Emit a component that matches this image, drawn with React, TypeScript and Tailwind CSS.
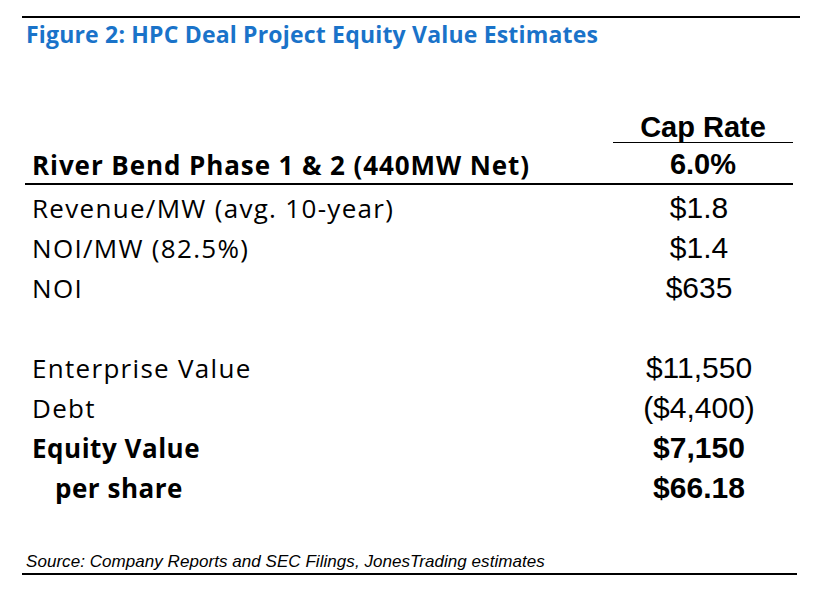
const rows = [
  { label: "Revenue/MW (avg. 10-year)", value: "$1.8" },
  { label: "NOI/MW (82.5%)", value: "$1.4" },
  { label: "NOI", value: "$635" },
  { label: "", value: "" },
  { label: "Enterprise Value", value: "$11,550" },
  { label: "Debt", value: "($4,400)" },
  { label: "Equity Value", value: "$7,150", bold: true },
  { label: "per share", value: "$66.18", bold: true, indent: true },
];

export default function App() {
  return (
    <div className="w-[824px] h-[596px] bg-white text-black pt-4">
      <div className="ml-[22px] w-[778px] border-t-2 border-black" />
      <h1 className="ml-[26px] mt-[4px] h-[24px] leading-[24px] text-[23px] tracking-[0.008em] font-bold text-[#1a73c9] font-['Open_Sans',sans-serif]">
        Figure 2: HPC Deal Project Equity Value Estimates
      </h1>

      <div className="ml-[25px] w-[768px] mt-[58px]">
        <div className="grid grid-cols-[1fr_180px]">
          <div />
          <div className="h-[39px] leading-[46px] text-center text-[29px] font-bold font-['Liberation_Sans',Arial,sans-serif] border-b border-black">
            Cap Rate
          </div>
        </div>
        <div className="grid grid-cols-[1fr_180px] h-[42px] border-b-2 border-black">
          <div className="pl-[7px] leading-[44px] text-[26px] tracking-[0.035em] font-bold font-['Open_Sans',sans-serif] whitespace-nowrap">
            River Bend Phase 1 &amp; 2 (440MW Net)
          </div>
          <div className="leading-[42px] text-center text-[29px] font-bold font-['Liberation_Sans',Arial,sans-serif]">
            6.0%
          </div>
        </div>
        <div className="pt-[3px]">
          {rows.map((r, i) => (
            <div key={i} className="grid grid-cols-[1fr_180px] h-[40px]">
              <div
                className={`leading-[40px] text-[26px] font-['Open_Sans',sans-serif] whitespace-nowrap ${r.bold ? "font-bold tracking-[0.02em]" : "tracking-[0.05em]"} ${r.indent ? "pl-[30px]" : "pl-[7px]"}`}
              >
                {r.label}
              </div>
              <div
                className={`leading-[40px] text-center pr-2 text-[30px] font-['Liberation_Sans',Arial,sans-serif] ${r.bold ? "font-bold" : ""}`}
              >
                {r.value}
              </div>
            </div>
          ))}
        </div>
      </div>

      <div className="ml-[22px] w-[775px] mt-[43px] border-b-2 border-black">
        <p className="pl-[4px] leading-[22px] text-[17px] tracking-[0.003em] italic font-['Liberation_Sans',Arial,sans-serif]">
          Source: Company Reports and SEC Filings, JonesTrading estimates
        </p>
      </div>
    </div>
  );
}
